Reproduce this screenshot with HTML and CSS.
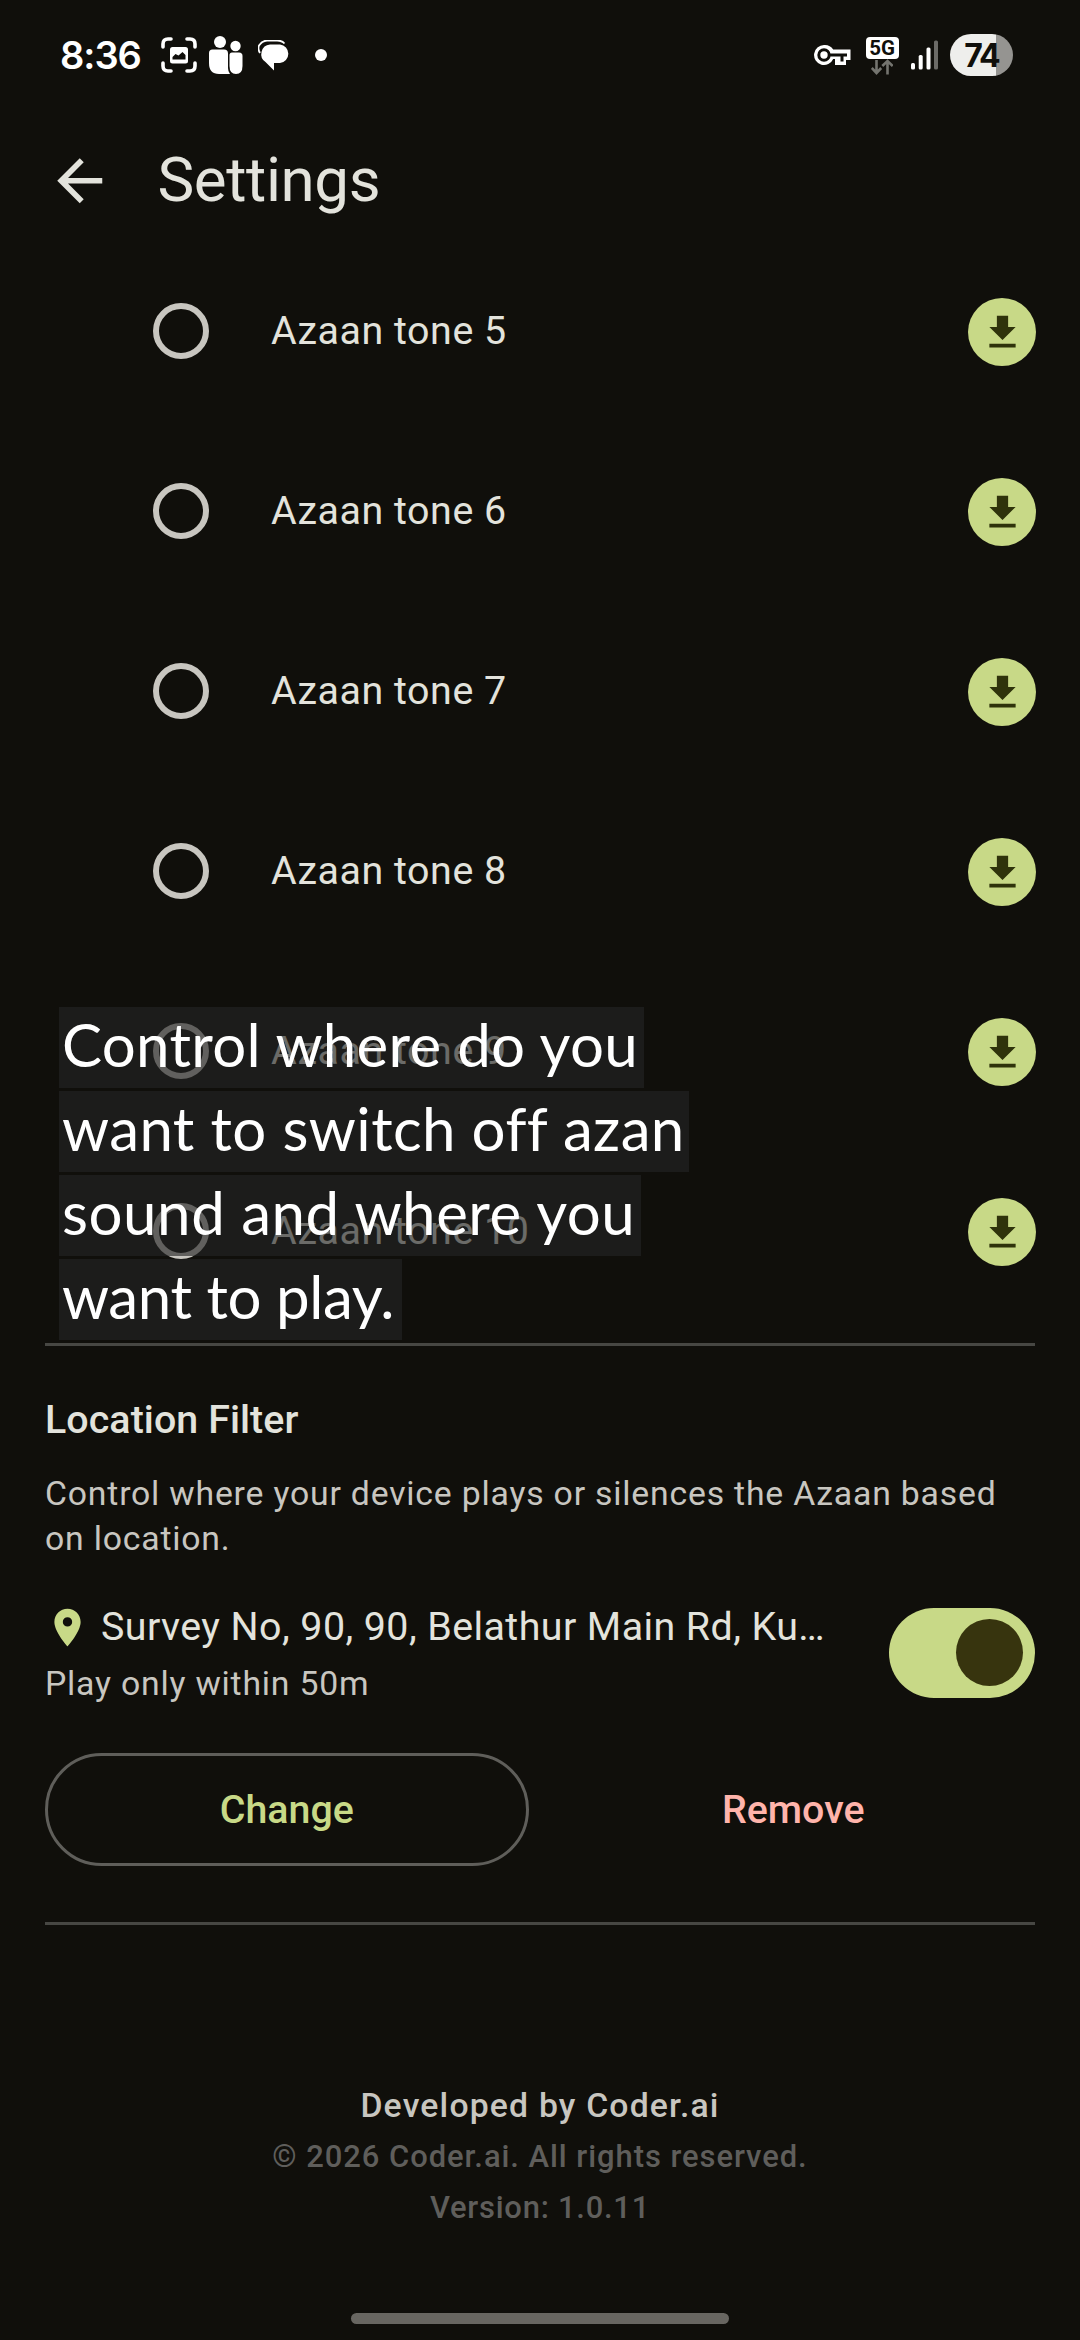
FILE: index.html
```html
<!DOCTYPE html>
<html lang="en">
<head>
<meta charset="utf-8">
<title>Settings</title>
<link rel="stylesheet" href="styles.css">
</head>
<body>
<svg width="0" height="0" class="defs" aria-hidden="true">
  <symbol id="download" viewBox="0 0 24 24"><path d="M19 9h-4V3H9v6H5l7 7 7-7zM5 18v2h14v-2H5z"/></symbol>
</svg>
<div class="screen">
  <div class="status">
    <span class="clock">8:36</span>
    <svg class="s-shot" viewBox="0 0 36 36" width="36" height="36" fill="none" stroke="#fff" stroke-width="3.6" stroke-linecap="round"><path d="M2 10V7q0-5 5-5h3M26 2h3q5 0 5 5v3M34 26v3q0 5-5 5h-3M10 34H7q-5 0-5-5v-3"/><rect x="9" y="10" width="18" height="16.500" rx="2.500" fill="#fff" stroke="none"/><path d="M11.500 22.500v-2.500l3-3 3 1.500 4-3.500 3 3v4.500z" fill="#100f0b" stroke="none"/></svg>
    <svg class="s-people" viewBox="0 0 34 38" width="34" height="38" fill="#fff"><circle cx="11" cy="6" r="6"/><circle cx="26.500" cy="10" r="5.200"/><path d="M3.500 13.500H15q4 0 4 4V32q0 3.500 2 6H10Q0 38 0 27V17q0-3.500 3.500-3.500z"/><path d="M23 16.500h7q3.500 0 3.500 3.500v10q0 8-6.500 8t-6.500-8V19q0-2.500 2.500-2.500z"/></svg>
    <svg class="s-chat" viewBox="0 0 32 31" width="32" height="31"><path d="M2 13Q-.5 9 1 5.500 4 .8 9 .5h10q5 0 7.500 3" fill="none" stroke="#fff" stroke-width="1.800"/><path d="M12 4.500h10a9.300 9.300 0 0 1 0 18.500h-6v7.500L7.500 22A9.600 9.600 0 0 1 12 4.500z" fill="#fff"/></svg>
    <span class="s-dot"></span>
    <svg class="s-key" viewBox="0 0 38 22" width="38" height="22"><path d="M11 1a10 10 0 1 0 9.200 14H22v6h11v-5h4.500V5.500H20.200A10 10 0 0 0 11 1z" fill="#fff"/><circle cx="11" cy="11" r="5.200" fill="none" stroke="#100f0b" stroke-width="3"/><path d="M15.500 9.500H34v3h-3.500v5h-3v-5h-12z" fill="#100f0b"/></svg>
    <span class="net"><b>5G</b><svg viewBox="0 0 22 16" width="22" height="16" fill="none" stroke="#74746f" stroke-width="2.600"><path d="M5.500 1v13M.800 9l4.700 5 4.700-5M16.500 15.500v-13M11.300 7l5.200-5 5.200 5"/></svg></span>
    <svg class="s-signal" viewBox="0 0 28 30" width="28" height="30"><g fill="#fff"><rect y="23" width="4" height="6.500" rx="1.500"/><rect x="7.700" y="15" width="4" height="14.500" rx="1.500"/><rect x="15.500" y="7.500" width="4" height="22" rx="1.500"/></g><rect x="23" y=".5" width="4" height="29" rx="1.500" fill="#6c6b67"/></svg>
    <span class="battery">74</span>
  </div>
  <header class="bar">
    <svg viewBox="0 0 24 24" width="67.500" height="67.500" fill="#e3e3dc"><path d="M20 11H7.830l5.590-5.590L12 4l-8 8 8 8 1.410-1.410L7.830 13H20v-2z"/></svg>
    <h1>Settings</h1>
  </header>
  <ul class="tones">
    <li><i class="radio"></i><span>Azaan tone 5</span><button><svg><use href="#download"/></svg></button></li>
    <li><i class="radio"></i><span>Azaan tone 6</span><button><svg><use href="#download"/></svg></button></li>
    <li><i class="radio"></i><span>Azaan tone 7</span><button><svg><use href="#download"/></svg></button></li>
    <li><i class="radio"></i><span>Azaan tone 8</span><button><svg><use href="#download"/></svg></button></li>
    <li><i class="radio"></i><span>Azaan tone 9</span><button><svg><use href="#download"/></svg></button></li>
    <li><i class="radio"></i><span>Azaan tone 10</span><button><svg><use href="#download"/></svg></button></li>
  </ul>
  <section class="filter">
    <h2>Location Filter</h2>
    <p class="desc">Control where your device plays or silences the Azaan based on location.</p>
    <div class="place">
      <div class="place-text">
        <div class="name"><svg viewBox="0 0 24 24" width="45" height="45"><path d="M12 2C8.130 2 5 5.130 5 9c0 5.250 7 13 7 13s7-7.750 7-13c0-3.870-3.130-7-7-7zm0 9.500a2.500 2.500 0 0 1 0-5 2.500 2.500 0 0 1 0 5z"/></svg><span>Survey No, 90, 90, Belathur Main Rd, Ku…</span></div>
        <div class="sub">Play only within 50m</div>
      </div>
      <div class="toggle"><i></i></div>
    </div>
    <div class="actions">
      <button class="change">Change</button>
      <button class="remove">Remove</button>
    </div>
  </section>
  <footer class="about">
    <p class="dev">Developed by Coder.ai</p>
    <p>© 2026 Coder.ai. All rights reserved.</p>
    <p class="version">Version: 1.0.11</p>
  </footer>
  <div class="home"></div>
  <div class="caption">
    <div class="l1">Control where do you</div>
    <div class="l2">want to switch off azan</div>
    <div class="l3">sound and where you</div>
    <div class="l4">want to play.</div>
  </div>
</div>
</body>
</html>
```
FILE: styles.css
```css
* { box-sizing: border-box; margin: 0; padding: 0; }
body { background: #100f0b; color: #e3e3dc; font-family: Roboto, sans-serif; }
.defs { display: block; }
svg { display: block; flex: none; }
button { font: inherit; color: inherit; background: none; border: 0; }
.screen { position: relative; width: 1080px; height: 2340px; display: flex; flex-direction: column; overflow: hidden; }

.status { height: 110px; display: flex; align-items: center; padding: 0 67px 0 60px; }
.clock { width: 101px; font: 600 38px/46px Inter, sans-serif; color: #fff; letter-spacing: -1px; }
.s-people { margin-left: 12px; }
.s-chat { margin-left: 15px; }
.s-dot { width: 12px; height: 12px; border-radius: 50%; background: #fff; margin-left: 25px; }
.s-key { margin-left: auto; }
.net { width: 34px; height: 37px; margin-left: 14px; display: flex; flex-direction: column; align-items: center; }
.net b { width: 33px; height: 22px; border-radius: 4px; background: #fff; color: #100f0b; font: 700 20.500px/23px Roboto, sans-serif; text-align: center; }
.s-signal { margin-left: 12px; }
.battery { width: 63px; height: 42px; margin-left: 11px; border-radius: 21px; background: linear-gradient(90deg, #eeeeec 0 46.500px, #959491 46.500px); color: #100f0b; font: 700 32px/43px Inter, sans-serif; letter-spacing: -2px; text-align: center; }

.bar { height: 141px; display: flex; align-items: center; padding-left: 46px; gap: 44px; }
.bar h1 { font-size: 61.875px; font-weight: 400; line-height: 80px; letter-spacing: -0.400px; margin-bottom: 2px; }

.tones { list-style: none; height: 1102px; margin: -10px 45px 0; }
.tones li { height: 180px; display: flex; align-items: center; }
.tones span { flex: 1; margin-left: 62px; font-size: 39.375px; line-height: 56px; letter-spacing: 0.550px; }
.radio { width: 56px; height: 56px; margin-left: 108px; border: 6px solid #c8c6c0; border-radius: 50%; }
.tones button { width: 68px; height: 68px; margin: 2px -1px 0 0; border-radius: 50%; background: #c8d987; display: grid; place-items: center; }
.tones button svg { width: 45px; height: 45px; fill: #2f330b; }

.filter { margin: 0 45px; height: 582px; border-top: 3px solid #474743; border-bottom: 3px solid #474743; padding-top: 46px; }
.filter h2 { font-size: 39.375px; font-weight: 500; line-height: 56px; letter-spacing: 0.070px; }
.desc { margin-top: 23px; font-size: 33.750px; line-height: 45px; letter-spacing: 0.810px; color: #c8c6c0; }
.place { display: flex; align-items: center; justify-content: space-between; margin-top: 38px; }
.name { display: flex; align-items: center; gap: 11px; font-size: 39.375px; line-height: 56px; letter-spacing: 0.430px; white-space: nowrap; }
.name svg { fill: #c8d987; }
.sub { margin-top: 6px; font-size: 33.750px; line-height: 45px; letter-spacing: 0.800px; color: #c8c6c0; }
.toggle { width: 146px; height: 90px; border-radius: 45px; background: #c8d987; display: flex; align-items: center; justify-content: flex-end; padding-right: 12px; }
.toggle i { width: 67px; height: 67px; border-radius: 50%; background: #37340e; }
.actions { display: grid; grid-template-columns: 1fr 1fr; gap: 23px; margin-top: 47px; }
.actions button { height: 113px; border-radius: 57px; font-size: 39.375px; font-weight: 500; }
.change { border: 3px solid #5f5e5a; color: #c8d987; }
.actions .remove { color: #ffb4ab; }
.actions .change { border: 3px solid #5f5e5a; }

.about { margin-top: 158px; text-align: center; color: #5f5e5b; }
.about p { font-size: 30.940px; font-weight: 500; line-height: 45px; margin-top: 6px; letter-spacing: 0.950px; }
.about .dev { font-size: 33.750px; color: #c8c6c0; margin-top: 0; letter-spacing: 1.180px; }
.about .version { letter-spacing: 0.750px; }
.home { width: 378px; height: 11px; border-radius: 6px; background: #686661; margin: auto auto 16px; }

.caption { position: absolute; left: 59px; top: 1007px; display: flex; flex-direction: column; align-items: flex-start; gap: 3px; font: 400 60px/75px Lato, sans-serif; color: #fff; white-space: nowrap; font-variant-ligatures: none; }
.caption div { height: 81px; padding-left: 3px; background: rgba(36, 36, 36, 0.630); }
.l1 { width: 585px; letter-spacing: 0.300px; }
.l2 { width: 630px; letter-spacing: 0.400px; }
.l3 { width: 582px; letter-spacing: 0.550px; }
.l4 { width: 343px; letter-spacing: -0.400px; }
```
